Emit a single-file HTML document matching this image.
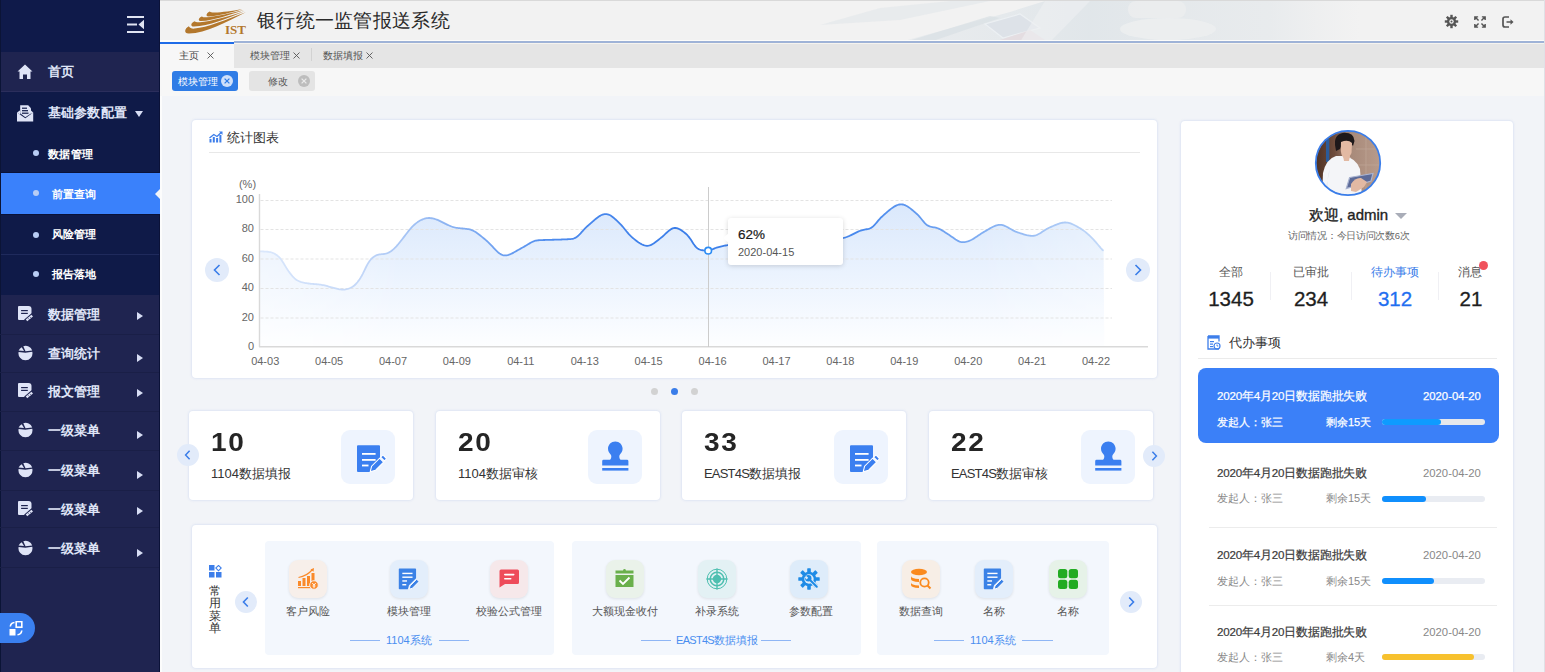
<!DOCTYPE html>
<html><head><meta charset="utf-8">
<style>
*{box-sizing:border-box;margin:0;padding:0}
html,body{width:1545px;height:672px;overflow:hidden}
body{position:relative;background:#f2f4f8;font-family:"Liberation Sans",sans-serif;color:#333}
.a{position:absolute}
svg{display:block}
/* sidebar */
.mi{position:absolute;left:0;width:159px;color:#dfe4f7;font-size:13.3px;letter-spacing:0.3px;font-weight:bold;line-height:20px;height:20px}
.mi .t{position:absolute;left:47.5px;top:0}
.mi svg{position:absolute}
.sub{position:absolute;left:0;width:159px;color:#fff;font-size:11.4px;font-weight:bold;height:16px}
.sub .dot{position:absolute;left:33px;top:5px;width:6px;height:6px;border-radius:50%;background:#b8cdf5}
.sub .t{position:absolute;left:51.5px;top:1px;line-height:16px;letter-spacing:0.3px}
.arr{position:absolute;left:137px;width:0;height:0;border-top:4px solid transparent;border-bottom:4px solid transparent;border-left:6px solid #d8def5}
.sep{position:absolute;left:0;width:159px;height:1px;background:#1a1f47}
</style></head><body>
<!-- SIDEBAR -->
<div class="a" style="left:0;top:0;width:160px;height:672px;background:#1f2450">
  <div class="a" style="left:0;top:0;width:160px;height:52px;background:#0f1a4a"></div>
  <div class="a" style="left:0;top:92px;width:160px;height:203px;background:#0f1a48"></div>
  <div class="a" style="left:0;top:172px;width:160px;height:1px;background:#0a1238"></div><div class="a" style="left:0;top:173px;width:160px;height:41px;background:#3a81fb"></div><div class="a" style="left:0;top:214px;width:160px;height:1px;background:#0a1238"></div>
  <div class="a" style="left:0;top:254px;width:160px;height:1px;background:#1f2a5c"></div>
  <div class="a" style="left:0;top:91px;width:160px;height:1px;background:#2b2e5c"></div>
  <div class="a" style="left:0;top:0;width:1px;height:672px;background:#0b1436"></div>
  <div class="a" style="left:159px;top:0;width:1px;height:172px;background:#0b1238"></div><div class="a" style="left:159px;top:215px;width:1px;height:457px;background:#0b1238"></div><div class="a" style="left:160px;top:44px;width:2px;height:628px;background:#fcfcfc"></div>
  <!-- hamburger -->
  <svg class="a" style="left:127px;top:16px" width="18" height="17" viewBox="0 0 18 17">
    <rect x="0" y="0" width="17" height="2" fill="#e0e4f2"/>
    <rect x="0" y="7.5" width="10" height="2" fill="#e0e4f2"/>
    <rect x="0" y="15" width="17" height="2" fill="#e0e4f2"/>
    <path d="M17 3.8 L11.5 8.5 L17 13.2Z" fill="#e0e4f2"/>
  </svg>
  <!-- 首页 -->
  <div class="mi" style="top:62px">
    <svg style="left:17px;top:2px" width="16" height="16" viewBox="0 0 16 16"><path d="M8 0.5 L15.5 7.5 L13.5 7.5 L13.5 15 L10 15 L10 10.5 L6 10.5 L6 15 L2.5 15 L2.5 7.5 L0.5 7.5Z" fill="#dfe4f7"/></svg>
    <span class="t" style="left:48px;font-size:13.3px">首页</span>
  </div>
  <!-- 基础参数配置 -->
  <div class="mi" style="top:103px">
    <svg style="left:17px;top:1px" width="17" height="18" viewBox="0 0 17 18"><path d="M0 8.5 L8.3 14.2 L16.2 8.5 V17.5 H0Z" fill="#dfe4f7"/><path d="M3.2 9.2 V1.2 H11.2 L14 4.3 V9.5 L8.3 13.2Z" fill="#dfe4f7"/><g fill="#0f1a48"><rect x="5" y="3.6" width="5" height="1.2"/><rect x="5" y="6.1" width="6" height="1.2"/><rect x="5" y="8.6" width="6.5" height="1.2"/></g><path d="M0 8.5 L3.2 6.2 V10.7Z M16.2 8.5 L14 6.5 V10Z" fill="#dfe4f7"/></svg>
    <span class="t">基础参数配置</span>
    <div class="a" style="left:135px;top:8px;width:0;height:0;border-left:4.5px solid transparent;border-right:4.5px solid transparent;border-top:6px solid #d8def5"></div>
  </div>
  <div class="sub" style="top:145px"><span class="dot"></span><span class="t" style="left:48px">数据管理</span></div>
  <div class="sub" style="top:185px"><span class="dot"></span><span class="t">前置查询</span></div>
  <div class="a" style="left:155px;top:188.7px;width:0;height:0;border-top:5px solid transparent;border-bottom:5px solid transparent;border-right:5px solid #f2f4f8"></div>
  <div class="sub" style="top:225px"><span class="dot" style="top:6.5px"></span><span class="t">风险管理</span></div>
  <div class="sub" style="top:265px"><span class="dot" style="top:6px"></span><span class="t">报告落地</span></div>
  <div class="mi" style="top:305px"><svg style="left:17px;top:0px" width="17" height="18" viewBox="0 0 17 18"><path d="M2 1 H11.5 Q14.5 1 14.5 4 V10.5 L8.5 15 H2 Q1 15 1 14 V2 Q1 1 2 1Z" fill="#dfe4f7"/><rect x="4.1" y="5" width="6.7" height="1.2" fill="#1f2450"/><rect x="4.1" y="7.8" width="6.7" height="1.2" fill="#1f2450"/><path d="M9.3 15.6 L15.4 10.4" stroke="#1f2450" stroke-width="4.4" stroke-linecap="round"/><path d="M9.5 15.4 L15.2 10.6" stroke="#dfe4f7" stroke-width="2.4"/><path d="M11 13.2 L12.4 14.6 M12.8 11.7 L14.2 13.1" stroke="#1f2450" stroke-width="0.6"/></svg><span class="t">数据管理</span><div class="arr" style="top:7px"></div></div>
<div class="mi" style="top:344px"><svg style="left:18px;top:1px" width="16" height="16" viewBox="0 0 16 16"><g fill="#dfe4f7"><path d="M14.3 6.8 A7 7 0 1 1 0.6 6.9 L7.4 7.7Z"/><path d="M7.5 6.2 L14.2 5.5 A7.1 7.1 0 0 0 5.3 1.2 Z"/><path d="M6.1 6 L3.7 2.2 A7 7 0 0 0 0.6 5.5 Z"/></g></svg><span class="t">查询统计</span><div class="arr" style="top:10px"></div></div>
<div class="mi" style="top:382px"><svg style="left:17px;top:0px" width="17" height="18" viewBox="0 0 17 18"><path d="M2 1 H11.5 Q14.5 1 14.5 4 V10.5 L8.5 15 H2 Q1 15 1 14 V2 Q1 1 2 1Z" fill="#dfe4f7"/><rect x="4.1" y="5" width="6.7" height="1.2" fill="#1f2450"/><rect x="4.1" y="7.8" width="6.7" height="1.2" fill="#1f2450"/><path d="M9.3 15.6 L15.4 10.4" stroke="#1f2450" stroke-width="4.4" stroke-linecap="round"/><path d="M9.5 15.4 L15.2 10.6" stroke="#dfe4f7" stroke-width="2.4"/><path d="M11 13.2 L12.4 14.6 M12.8 11.7 L14.2 13.1" stroke="#1f2450" stroke-width="0.6"/></svg><span class="t">报文管理</span><div class="arr" style="top:7px"></div></div>
<div class="mi" style="top:421px"><svg style="left:18px;top:1px" width="16" height="16" viewBox="0 0 16 16"><g fill="#dfe4f7"><path d="M14.3 6.8 A7 7 0 1 1 0.6 6.9 L7.4 7.7Z"/><path d="M7.5 6.2 L14.2 5.5 A7.1 7.1 0 0 0 5.3 1.2 Z"/><path d="M6.1 6 L3.7 2.2 A7 7 0 0 0 0.6 5.5 Z"/></g></svg><span class="t">一级菜单</span><div class="arr" style="top:10px"></div></div>
<div class="mi" style="top:461px"><svg style="left:18px;top:1px" width="16" height="16" viewBox="0 0 16 16"><g fill="#dfe4f7"><path d="M14.3 6.8 A7 7 0 1 1 0.6 6.9 L7.4 7.7Z"/><path d="M7.5 6.2 L14.2 5.5 A7.1 7.1 0 0 0 5.3 1.2 Z"/><path d="M6.1 6 L3.7 2.2 A7 7 0 0 0 0.6 5.5 Z"/></g></svg><span class="t">一级菜单</span><div class="arr" style="top:10px"></div></div>
<div class="mi" style="top:500px"><svg style="left:17px;top:0px" width="17" height="18" viewBox="0 0 17 18"><path d="M2 1 H11.5 Q14.5 1 14.5 4 V10.5 L8.5 15 H2 Q1 15 1 14 V2 Q1 1 2 1Z" fill="#dfe4f7"/><rect x="4.1" y="5" width="6.7" height="1.2" fill="#1f2450"/><rect x="4.1" y="7.8" width="6.7" height="1.2" fill="#1f2450"/><path d="M9.3 15.6 L15.4 10.4" stroke="#1f2450" stroke-width="4.4" stroke-linecap="round"/><path d="M9.5 15.4 L15.2 10.6" stroke="#dfe4f7" stroke-width="2.4"/><path d="M11 13.2 L12.4 14.6 M12.8 11.7 L14.2 13.1" stroke="#1f2450" stroke-width="0.6"/></svg><span class="t">一级菜单</span><div class="arr" style="top:7px"></div></div>
<div class="mi" style="top:539px"><svg style="left:18px;top:1px" width="16" height="16" viewBox="0 0 16 16"><g fill="#dfe4f7"><path d="M14.3 6.8 A7 7 0 1 1 0.6 6.9 L7.4 7.7Z"/><path d="M7.5 6.2 L14.2 5.5 A7.1 7.1 0 0 0 5.3 1.2 Z"/><path d="M6.1 6 L3.7 2.2 A7 7 0 0 0 0.6 5.5 Z"/></g></svg><span class="t">一级菜单</span><div class="arr" style="top:10px"></div></div>
<div class="sep" style="top:334px"></div>
<div class="sep" style="top:372px"></div>
<div class="sep" style="top:411px"></div>
<div class="sep" style="top:450px"></div>
<div class="sep" style="top:490px"></div>
<div class="sep" style="top:527px"></div>
<div class="sep" style="top:567px"></div>

  <!-- bottom pill -->
  <div class="a" style="left:0;top:613px;width:35px;height:30px;border-radius:0 15px 15px 0;background:#3a80f0"></div>
  <svg class="a" style="left:9px;top:621px" width="14" height="15" viewBox="0 0 14 15">
    <rect x="7.2" y="0.6" width="5.6" height="5.6" fill="none" stroke="#fff" stroke-width="1.6"/>
    <rect x="0.5" y="8" width="6" height="6.5" fill="#fff"/>
    <path d="M5.5 1.5 Q1.8 1.8 1.3 5.5" fill="none" stroke="#fff" stroke-width="1.6"/>
    <path d="M8.5 13.8 Q12.3 13.5 12.8 9.5" fill="none" stroke="#fff" stroke-width="1.6"/>
  </svg>
</div>

<!-- HEADER -->
<div class="a" style="left:160px;top:0;width:1385px;height:42px;background:#f2f2f2;border-top:1px solid #d9d9d9"></div>
<svg class="a" style="left:760px;top:1px" width="600" height="41" viewBox="760 1 600 41">
 <defs><linearGradient id="wm" x1="760" y1="0" x2="1360" y2="0" gradientUnits="userSpaceOnUse"><stop offset="0" stop-color="#e2e7eb" stop-opacity="0"/><stop offset="0.2" stop-color="#e2e7eb" stop-opacity="0.5"/><stop offset="0.55" stop-color="#dfe5e9" stop-opacity="0.9"/><stop offset="0.85" stop-color="#e4e8eb" stop-opacity="0.7"/><stop offset="1" stop-color="#e8eaec" stop-opacity="0"/></linearGradient></defs>
 <path d="M900 42 L1010 12 L1045 1 L1360 1 L1360 42Z" fill="url(#wm)"/>
 <path d="M820 25 L880 8 L950 1 L990 1 L900 20Z" fill="#e4e8eb" opacity="0.7"/>
 <path d="M905 42 L990 16 L1000 18 L930 42Z" fill="#d9dfe4" opacity="0.7"/>
 <path d="M985 24 L1020 14 L1040 28 L1003 38Z" fill="#dde2e8" stroke="#ecf0f3" stroke-width="1.2"/>
 <path d="M1000 40 L1030 30 L1045 40Z" fill="#e3d9de" opacity="0.8"/>
 <ellipse cx="1168" cy="29" rx="48" ry="11" fill="#eceef0" opacity="0.9"/>
 <rect x="1128" y="1" width="58" height="17" rx="8" fill="#eceeef" opacity="0.8"/>
 <path d="M1045 1 L1090 1 L1050 42 L1020 42Z" fill="#eef0f2" opacity="0.6"/>
</svg>
<div class="a" style="left:160px;top:40px;width:1385px;height:1px;background:#fdfdfb"></div><div class="a" style="left:160px;top:41px;width:1385px;height:2px;background:#9fb3d7"></div><div class="a" style="left:160px;top:43px;width:1385px;height:1px;background:#f6f4ef"></div>
<div class="a" style="left:160px;top:41px;width:74px;height:1px;background:#fdfdfb"></div><div class="a" style="left:160px;top:42px;width:74px;height:2px;background:#1f6ce8"></div>
<svg class="a" style="left:182px;top:5px" width="70" height="35" viewBox="182 5 70 35">
  <g fill="#b3772c">
   <path d="M188.8 26.3 C184.5 28.5 183.5 33.8 189 33.6 C206 33 226 22.5 245.8 12.3 C226 19.8 207 27.6 194.5 28.6 C191.5 28.8 189.8 28 188.8 26.3Z"/>
   <path d="M194.6 21.2 C190.8 22.8 190 26.6 194 26.5 C209 25.6 226 19 244.8 10.9 C227 17 211 21 200 22.2 C197.3 22.5 195.7 22.1 194.6 21.2Z"/>
   <path d="M201.8 16.5 C198.4 17.8 197.6 21.2 201 21.1 C214 20.2 229 15 243.8 9.9 C230 13.3 216 16.4 206.8 17.3 C204.3 17.5 202.8 17.2 201.8 16.5Z"/>
   <path d="M209.8 11.6 C206.6 12.8 205 16.6 208.6 16.5 C219 16 231 12.6 242.2 9.3 C232 11 222 12.4 214.6 12.6 C212 12.7 210.7 12.4 209.8 11.6Z"/>
  </g>
  <text x="225" y="33.9" font-family="Liberation Serif" font-size="13" font-weight="bold" fill="#b3772c">IST</text>
</svg>
<div class="a" style="left:257px;top:9px;font-size:19.3px;letter-spacing:0.3px;line-height:24px;color:#2a2a2a">银行统一监管报送系统</div>
<!-- header icons -->
<svg class="a" style="left:1444px;top:14px" width="15" height="15" viewBox="0 0 15 15">
  <g fill="#555"><circle cx="7.5" cy="7.5" r="4.6"/>
  <g id="tooth"><rect x="6.3" y="0.8" width="2.4" height="3"/></g>
  <use href="#tooth" transform="rotate(45 7.5 7.5)"/><use href="#tooth" transform="rotate(90 7.5 7.5)"/><use href="#tooth" transform="rotate(135 7.5 7.5)"/><use href="#tooth" transform="rotate(180 7.5 7.5)"/><use href="#tooth" transform="rotate(225 7.5 7.5)"/><use href="#tooth" transform="rotate(270 7.5 7.5)"/><use href="#tooth" transform="rotate(315 7.5 7.5)"/></g>
  <circle cx="7.5" cy="7.5" r="2.2" fill="#f2f2f2"/><circle cx="7.5" cy="7.5" r="1" fill="#555"/>
</svg>
<svg class="a" style="left:1474px;top:15.5px" width="12" height="12" viewBox="0 0 14 14">
  <g fill="none" stroke="#555" stroke-width="1.7">
   <path d="M1 4.8 V1 H4.8 M1 1 L5.3 5.3"/><path d="M9.2 1 H13 V4.8 M13 1 L8.7 5.3"/><path d="M1 9.2 V13 H4.8 M1 13 L5.3 8.7"/><path d="M13 9.2 V13 H9.2 M13 13 L8.7 8.7"/>
  </g>
</svg>
<svg class="a" style="left:1501.5px;top:15.5px" width="12" height="12" viewBox="0 0 12 12">
  <path d="M7 1 H3 Q1 1 1 3 V9 Q1 11 3 11 H7" fill="none" stroke="#555" stroke-width="1.7"/><path d="M4.5 6 H9" stroke="#555" stroke-width="1.5"/><path d="M8.5 3.3 L11.5 6 L8.5 8.7Z" fill="#555"/>
</svg>

<!-- TABS -->
<div class="a" style="left:160px;top:44px;width:1385px;height:24px;background:#e5e5e5"></div>
<div class="a" style="left:160px;top:44px;width:74px;height:24px;background:#f7f7f7"></div>
<div class="a" style="left:179px;top:48px;font-size:10.1px;line-height:16px;color:#444">主页</div>
<svg class="a" style="left:207px;top:52px" width="7" height="7" viewBox="0 0 7 7"><path d="M0.5 0.5 L6.5 6.5 M6.5 0.5 L0.5 6.5" stroke="#555" stroke-width="0.9"/></svg>
<div class="a" style="left:250px;top:48px;font-size:10.1px;line-height:16px;color:#555">模块管理</div>
<svg class="a" style="left:293px;top:52px" width="7" height="7" viewBox="0 0 7 7"><path d="M0.5 0.5 L6.5 6.5 M6.5 0.5 L0.5 6.5" stroke="#555" stroke-width="0.9"/></svg>
<div class="a" style="left:311px;top:48px;width:1px;height:13px;background:#d2d2d2"></div>
<div class="a" style="left:323px;top:48px;font-size:10.1px;line-height:16px;color:#555">数据填报</div>
<svg class="a" style="left:366px;top:52px" width="7" height="7" viewBox="0 0 7 7"><path d="M0.5 0.5 L6.5 6.5 M6.5 0.5 L0.5 6.5" stroke="#555" stroke-width="0.9"/></svg>
<!-- TAGS -->
<div class="a" style="left:160px;top:68px;width:1385px;height:28px;background:#f7f7f7"></div>
<div class="a" style="left:172px;top:71px;width:66px;height:20px;border-radius:3px;background:#2f7ce6"></div>
<div class="a" style="left:178px;top:74px;font-size:10.1px;line-height:16px;color:#fff">模块管理</div>
<svg class="a" style="left:221px;top:75px" width="12" height="12" viewBox="0 0 12 12"><circle cx="6" cy="6" r="6" fill="#cfe0fa"/><path d="M3.6 3.6 L8.4 8.4 M8.4 3.6 L3.6 8.4" stroke="#2f7ce6" stroke-width="1.3"/></svg>
<div class="a" style="left:249px;top:71px;width:66px;height:20px;border-radius:3px;background:#e4e4e4"></div>
<div class="a" style="left:268px;top:74px;font-size:10.1px;line-height:16px;color:#555">修改</div>
<svg class="a" style="left:298px;top:75px" width="12" height="12" viewBox="0 0 12 12"><circle cx="6" cy="6" r="6" fill="#bdbdbd"/><path d="M3.6 3.6 L8.4 8.4 M8.4 3.6 L3.6 8.4" stroke="#eaeaea" stroke-width="1.3"/></svg>

<!-- CHART PANEL -->
<div class="a" style="left:192px;top:120px;width:965px;height:258px;background:#fff;border-radius:4px;box-shadow:0 0 2px 1px rgba(215,224,242,0.7)"></div>
<svg class="a" style="left:209px;top:131px" width="14" height="12" viewBox="0 0 14 12">
 <g fill="#3d7eea"><rect x="0.5" y="8" width="2" height="3.5"/><rect x="3.8" y="6" width="2" height="5.5"/><rect x="7.1" y="7" width="2" height="4.5"/><rect x="10.4" y="4" width="2" height="7.5"/></g>
 <path d="M0.5 7 L4.8 3.5 L8 5.5 L12.5 1.2" fill="none" stroke="#3d7eea" stroke-width="1.3"/><path d="M10 0.5 L13.5 0.5 L13.5 4Z" fill="#3d7eea"/>
</svg>
<div class="a" style="left:227px;top:129px;font-size:12.5px;line-height:18px;color:#333">统计图表</div>
<div class="a" style="left:209px;top:152px;width:931px;height:1px;background:#e8e8e8"></div>
<svg class="a" style="left:192px;top:120px" width="965" height="258" viewBox="192 120 965 258">
 <defs>
  <linearGradient id="lg" x1="259" y1="0" x2="1105" y2="0" gradientUnits="userSpaceOnUse">
   <stop offset="0" stop-color="#dbe8fc"/><stop offset="0.12" stop-color="#c3d7f8"/><stop offset="0.22" stop-color="#8db4f2"/><stop offset="0.35" stop-color="#4d8bee"/><stop offset="0.5" stop-color="#3a7de9"/><stop offset="0.72" stop-color="#4a8aed"/><stop offset="0.88" stop-color="#8cb5f3"/><stop offset="1" stop-color="#c5daf8"/>
  </linearGradient>
  <linearGradient id="ag" x1="0" y1="204" x2="0" y2="347" gradientUnits="userSpaceOnUse">
   <stop offset="0" stop-color="#dae8fc"/><stop offset="0.5" stop-color="#ebf3fe"/><stop offset="0.85" stop-color="#f8fbff"/><stop offset="1" stop-color="#fdfeff"/>
  </linearGradient>
  <linearGradient id="amg" x1="259" y1="0" x2="1105" y2="0" gradientUnits="userSpaceOnUse"><stop offset="0" stop-color="#fff" stop-opacity="0.6"/><stop offset="0.17" stop-color="#fff" stop-opacity="1"/><stop offset="0.85" stop-color="#fff" stop-opacity="1"/><stop offset="1" stop-color="#fff" stop-opacity="0.75"/></linearGradient>
  <mask id="am" maskUnits="userSpaceOnUse" x="250" y="190" width="870" height="170"><rect x="250" y="190" width="870" height="170" fill="url(#amg)"/></mask>
 </defs>
 <path d="M259.6 251.41 L260.6 251.43 L261.6 251.44 L262.6 251.47 L263.6 251.51 L264.6 251.55 L265.6 251.61 L266.6 251.68 L267.6 251.76 L268.6 251.88 L269.6 252.03 L270.6 252.23 L271.6 252.50 L272.6 252.85 L273.6 253.29 L274.6 253.80 L275.6 254.39 L276.6 255.06 L277.6 255.81 L278.6 256.67 L279.6 257.67 L280.6 258.83 L281.6 260.17 L282.6 261.68 L283.6 263.30 L284.6 264.97 L285.6 266.65 L286.6 268.26 L287.6 269.79 L288.6 271.24 L289.6 272.61 L290.6 273.91 L291.6 275.15 L292.6 276.32 L293.6 277.40 L294.6 278.37 L295.6 279.21 L296.6 279.93 L297.6 280.53 L298.6 281.02 L299.6 281.43 L300.6 281.78 L301.6 282.09 L302.6 282.36 L303.6 282.61 L304.6 282.83 L305.6 283.03 L306.6 283.21 L307.6 283.37 L308.6 283.51 L309.6 283.63 L310.6 283.75 L311.6 283.84 L312.6 283.93 L313.6 284.01 L314.6 284.09 L315.6 284.16 L316.6 284.24 L317.6 284.33 L318.6 284.43 L319.6 284.54 L320.6 284.68 L321.6 284.84 L322.6 285.02 L323.6 285.23 L324.6 285.46 L325.6 285.71 L326.6 285.97 L327.6 286.24 L328.6 286.51 L329.6 286.78 L330.6 287.04 L331.6 287.30 L332.6 287.56 L333.6 287.82 L334.6 288.08 L335.6 288.34 L336.6 288.60 L337.6 288.85 L338.6 289.08 L339.6 289.28 L340.6 289.44 L341.6 289.56 L342.6 289.62 L343.6 289.62 L344.6 289.55 L345.6 289.41 L346.6 289.21 L347.6 288.94 L348.6 288.61 L349.6 288.22 L350.6 287.78 L351.6 287.28 L352.6 286.70 L353.6 286.02 L354.6 285.22 L355.6 284.28 L356.6 283.20 L357.6 281.98 L358.6 280.65 L359.6 279.20 L360.6 277.64 L361.6 275.95 L362.6 274.11 L363.6 272.15 L364.6 270.09 L365.6 268.01 L366.6 266.00 L367.6 264.12 L368.6 262.44 L369.6 260.98 L370.6 259.73 L371.6 258.65 L372.6 257.72 L373.6 256.91 L374.6 256.23 L375.6 255.66 L376.6 255.21 L377.6 254.87 L378.6 254.63 L379.6 254.45 L380.6 254.32 L381.6 254.22 L382.6 254.12 L383.6 254.01 L384.6 253.87 L385.6 253.68 L386.6 253.41 L387.6 253.05 L388.6 252.59 L389.6 252.04 L390.6 251.40 L391.6 250.69 L392.6 249.92 L393.6 249.07 L394.6 248.16 L395.6 247.17 L396.6 246.10 L397.6 244.96 L398.6 243.76 L399.6 242.52 L400.6 241.26 L401.6 239.98 L402.6 238.70 L403.6 237.41 L404.6 236.10 L405.6 234.79 L406.6 233.48 L407.6 232.19 L408.6 230.93 L409.6 229.72 L410.6 228.56 L411.6 227.47 L412.6 226.43 L413.6 225.46 L414.6 224.53 L415.6 223.66 L416.6 222.85 L417.6 222.10 L418.6 221.43 L419.6 220.83 L420.6 220.29 L421.6 219.81 L422.6 219.38 L423.6 219.00 L424.6 218.67 L425.6 218.39 L426.6 218.19 L427.6 218.05 L428.6 218.00 L429.6 218.02 L430.6 218.10 L431.6 218.25 L432.6 218.44 L433.6 218.67 L434.6 218.94 L435.6 219.24 L436.6 219.57 L437.6 219.95 L438.6 220.37 L439.6 220.84 L440.6 221.34 L441.6 221.86 L442.6 222.38 L443.6 222.90 L444.6 223.40 L445.6 223.89 L446.6 224.37 L447.6 224.83 L448.6 225.28 L449.6 225.71 L450.6 226.12 L451.6 226.50 L452.6 226.84 L453.6 227.15 L454.6 227.40 L455.6 227.62 L456.6 227.80 L457.6 227.96 L458.6 228.09 L459.6 228.20 L460.6 228.30 L461.6 228.40 L462.6 228.49 L463.6 228.58 L464.6 228.68 L465.6 228.79 L466.6 228.91 L467.6 229.06 L468.6 229.23 L469.6 229.45 L470.6 229.72 L471.6 230.05 L472.6 230.45 L473.6 230.93 L474.6 231.47 L475.6 232.08 L476.6 232.74 L477.6 233.46 L478.6 234.20 L479.6 234.98 L480.6 235.78 L481.6 236.59 L482.6 237.41 L483.6 238.23 L484.6 239.05 L485.6 239.87 L486.6 240.72 L487.6 241.61 L488.6 242.54 L489.6 243.52 L490.6 244.55 L491.6 245.61 L492.6 246.70 L493.6 247.79 L494.6 248.86 L495.6 249.91 L496.6 250.91 L497.6 251.85 L498.6 252.71 L499.6 253.47 L500.6 254.12 L501.6 254.64 L502.6 255.03 L503.6 255.28 L504.6 255.39 L505.6 255.39 L506.6 255.28 L507.6 255.07 L508.6 254.79 L509.6 254.45 L510.6 254.05 L511.6 253.60 L512.6 253.10 L513.6 252.58 L514.6 252.03 L515.6 251.47 L516.6 250.89 L517.6 250.31 L518.6 249.74 L519.6 249.17 L520.6 248.62 L521.6 248.07 L522.6 247.52 L523.6 246.97 L524.6 246.40 L525.6 245.81 L526.6 245.20 L527.6 244.58 L528.6 243.97 L529.6 243.36 L530.6 242.79 L531.6 242.25 L532.6 241.76 L533.6 241.34 L534.6 240.99 L535.6 240.71 L536.6 240.51 L537.6 240.36 L538.6 240.26 L539.6 240.19 L540.6 240.13 L541.6 240.09 L542.6 240.06 L543.6 240.02 L544.6 240.00 L545.6 239.97 L546.6 239.94 L547.6 239.91 L548.6 239.89 L549.6 239.86 L550.6 239.83 L551.6 239.80 L552.6 239.76 L553.6 239.73 L554.6 239.70 L555.6 239.67 L556.6 239.64 L557.6 239.61 L558.6 239.58 L559.6 239.56 L560.6 239.53 L561.6 239.50 L562.6 239.46 L563.6 239.43 L564.6 239.39 L565.6 239.35 L566.6 239.31 L567.6 239.26 L568.6 239.20 L569.6 239.14 L570.6 239.05 L571.6 238.94 L572.6 238.77 L573.6 238.52 L574.6 238.16 L575.6 237.66 L576.6 237.02 L577.6 236.25 L578.6 235.36 L579.6 234.37 L580.6 233.32 L581.6 232.22 L582.6 231.10 L583.6 229.99 L584.6 228.92 L585.6 227.89 L586.6 226.91 L587.6 225.99 L588.6 225.10 L589.6 224.23 L590.6 223.36 L591.6 222.50 L592.6 221.63 L593.6 220.76 L594.6 219.90 L595.6 219.06 L596.6 218.26 L597.6 217.49 L598.6 216.77 L599.6 216.12 L600.6 215.53 L601.6 215.03 L602.6 214.62 L603.6 214.31 L604.6 214.11 L605.6 214.03 L606.6 214.08 L607.6 214.27 L608.6 214.58 L609.6 215.02 L610.6 215.56 L611.6 216.21 L612.6 216.94 L613.6 217.74 L614.6 218.60 L615.6 219.50 L616.6 220.42 L617.6 221.37 L618.6 222.33 L619.6 223.32 L620.6 224.33 L621.6 225.40 L622.6 226.53 L623.6 227.72 L624.6 228.96 L625.6 230.21 L626.6 231.47 L627.6 232.69 L628.6 233.86 L629.6 234.95 L630.6 235.96 L631.6 236.89 L632.6 237.77 L633.6 238.60 L634.6 239.41 L635.6 240.20 L636.6 240.96 L637.6 241.70 L638.6 242.40 L639.6 243.06 L640.6 243.66 L641.6 244.21 L642.6 244.70 L643.6 245.10 L644.6 245.42 L645.6 245.65 L646.6 245.77 L647.6 245.78 L648.6 245.66 L649.6 245.43 L650.6 245.07 L651.6 244.60 L652.6 244.04 L653.6 243.40 L654.6 242.70 L655.6 241.97 L656.6 241.21 L657.6 240.45 L658.6 239.68 L659.6 238.91 L660.6 238.12 L661.6 237.31 L662.6 236.45 L663.6 235.56 L664.6 234.63 L665.6 233.68 L666.6 232.74 L667.6 231.82 L668.6 230.95 L669.6 230.16 L670.6 229.46 L671.6 228.88 L672.6 228.43 L673.6 228.14 L674.6 227.99 L675.6 228.00 L676.6 228.15 L677.6 228.42 L678.6 228.80 L679.6 229.28 L680.6 229.84 L681.6 230.47 L682.6 231.16 L683.6 231.90 L684.6 232.69 L685.6 233.53 L686.6 234.45 L687.6 235.47 L688.6 236.61 L689.6 237.91 L690.6 239.33 L691.6 240.85 L692.6 242.40 L693.6 243.92 L694.6 245.34 L695.6 246.59 L696.6 247.63 L697.6 248.45 L698.6 249.06 L699.6 249.50 L700.6 249.82 L701.6 250.06 L702.6 250.24 L703.6 250.40 L704.6 250.52 L705.6 250.60 L706.6 250.64 L707.6 250.61 L708.6 250.51 L709.6 250.32 L710.6 250.05 L711.6 249.69 L712.6 249.28 L713.6 248.85 L714.6 248.42 L715.6 248.02 L716.6 247.66 L717.6 247.33 L718.6 247.04 L719.6 246.77 L720.6 246.51 L721.6 246.28 L722.6 246.06 L723.6 245.85 L724.6 245.66 L725.6 245.49 L726.6 245.33 L727.6 245.18 L728.6 245.05 L729.6 244.92 L730.6 244.80 L731.6 244.68 L732.6 244.56 L733.6 244.45 L734.6 244.34 L735.6 244.23 L736.6 244.13 L737.6 244.03 L738.6 243.93 L739.6 243.84 L740.6 243.75 L741.6 243.66 L742.6 243.57 L743.6 243.49 L744.6 243.41 L745.6 243.33 L746.6 243.26 L747.6 243.18 L748.6 243.11 L749.6 243.05 L750.6 242.98 L751.6 242.92 L752.6 242.86 L753.6 242.81 L754.6 242.75 L755.6 242.70 L756.6 242.65 L757.6 242.61 L758.6 242.56 L759.6 242.52 L760.6 242.48 L761.6 242.44 L762.6 242.41 L763.6 242.38 L764.6 242.34 L765.6 242.31 L766.6 242.29 L767.6 242.26 L768.6 242.23 L769.6 242.21 L770.6 242.18 L771.6 242.16 L772.6 242.14 L773.6 242.12 L774.6 242.10 L775.6 242.08 L776.6 242.06 L777.6 242.04 L778.6 242.02 L779.6 242.00 L780.6 241.98 L781.6 241.96 L782.6 241.95 L783.6 241.93 L784.6 241.91 L785.6 241.89 L786.6 241.87 L787.6 241.85 L788.6 241.83 L789.6 241.80 L790.6 241.78 L791.6 241.76 L792.6 241.73 L793.6 241.70 L794.6 241.67 L795.6 241.65 L796.6 241.61 L797.6 241.58 L798.6 241.55 L799.6 241.51 L800.6 241.47 L801.6 241.44 L802.6 241.40 L803.6 241.35 L804.6 241.31 L805.6 241.27 L806.6 241.22 L807.6 241.18 L808.6 241.13 L809.6 241.08 L810.6 241.03 L811.6 240.97 L812.6 240.92 L813.6 240.86 L814.6 240.81 L815.6 240.74 L816.6 240.68 L817.6 240.62 L818.6 240.55 L819.6 240.48 L820.6 240.41 L821.6 240.34 L822.6 240.26 L823.6 240.18 L824.6 240.10 L825.6 240.01 L826.6 239.93 L827.6 239.84 L828.6 239.74 L829.6 239.65 L830.6 239.55 L831.6 239.44 L832.6 239.34 L833.6 239.23 L834.6 239.11 L835.6 239.00 L836.6 238.88 L837.6 238.75 L838.6 238.63 L839.6 238.49 L840.6 238.35 L841.6 238.20 L842.6 238.03 L843.6 237.83 L844.6 237.60 L845.6 237.33 L846.6 237.01 L847.6 236.65 L848.6 236.24 L849.6 235.81 L850.6 235.34 L851.6 234.85 L852.6 234.35 L853.6 233.84 L854.6 233.33 L855.6 232.83 L856.6 232.34 L857.6 231.87 L858.6 231.43 L859.6 231.02 L860.6 230.65 L861.6 230.32 L862.6 230.04 L863.6 229.80 L864.6 229.60 L865.6 229.42 L866.6 229.25 L867.6 229.06 L868.6 228.84 L869.6 228.53 L870.6 228.11 L871.6 227.55 L872.6 226.82 L873.6 225.93 L874.6 224.90 L875.6 223.76 L876.6 222.57 L877.6 221.35 L878.6 220.17 L879.6 219.04 L880.6 217.98 L881.6 216.99 L882.6 216.05 L883.6 215.14 L884.6 214.25 L885.6 213.37 L886.6 212.49 L887.6 211.62 L888.6 210.77 L889.6 209.94 L890.6 209.14 L891.6 208.38 L892.6 207.66 L893.6 207.00 L894.6 206.39 L895.6 205.85 L896.6 205.38 L897.6 204.99 L898.6 204.69 L899.6 204.49 L900.6 204.38 L901.6 204.39 L902.6 204.50 L903.6 204.72 L904.6 205.04 L905.6 205.45 L906.6 205.96 L907.6 206.54 L908.6 207.18 L909.6 207.89 L910.6 208.64 L911.6 209.44 L912.6 210.26 L913.6 211.10 L914.6 211.95 L915.6 212.83 L916.6 213.74 L917.6 214.69 L918.6 215.72 L919.6 216.82 L920.6 218.00 L921.6 219.23 L922.6 220.48 L923.6 221.69 L924.6 222.83 L925.6 223.85 L926.6 224.71 L927.6 225.41 L928.6 225.95 L929.6 226.35 L930.6 226.65 L931.6 226.89 L932.6 227.08 L933.6 227.27 L934.6 227.46 L935.6 227.67 L936.6 227.93 L937.6 228.24 L938.6 228.61 L939.6 229.06 L940.6 229.56 L941.6 230.12 L942.6 230.72 L943.6 231.36 L944.6 232.01 L945.6 232.66 L946.6 233.31 L947.6 233.96 L948.6 234.61 L949.6 235.27 L950.6 235.95 L951.6 236.64 L952.6 237.35 L953.6 238.06 L954.6 238.75 L955.6 239.43 L956.6 240.06 L957.6 240.64 L958.6 241.14 L959.6 241.56 L960.6 241.88 L961.6 242.10 L962.6 242.21 L963.6 242.21 L964.6 242.11 L965.6 241.93 L966.6 241.69 L967.6 241.39 L968.6 241.05 L969.6 240.66 L970.6 240.23 L971.6 239.75 L972.6 239.21 L973.6 238.63 L974.6 238.01 L975.6 237.36 L976.6 236.69 L977.6 236.01 L978.6 235.32 L979.6 234.65 L980.6 233.99 L981.6 233.35 L982.6 232.74 L983.6 232.14 L984.6 231.56 L985.6 230.98 L986.6 230.40 L987.6 229.82 L988.6 229.23 L989.6 228.65 L990.6 228.08 L991.6 227.52 L992.6 227.00 L993.6 226.52 L994.6 226.08 L995.6 225.69 L996.6 225.36 L997.6 225.11 L998.6 224.94 L999.6 224.85 L1000.6 224.86 L1001.6 224.97 L1002.6 225.16 L1003.6 225.45 L1004.6 225.82 L1005.6 226.26 L1006.6 226.75 L1007.6 227.28 L1008.6 227.85 L1009.6 228.43 L1010.6 229.01 L1011.6 229.58 L1012.6 230.13 L1013.6 230.65 L1014.6 231.12 L1015.6 231.56 L1016.6 231.96 L1017.6 232.33 L1018.6 232.67 L1019.6 233.01 L1020.6 233.34 L1021.6 233.66 L1022.6 233.98 L1023.6 234.28 L1024.6 234.56 L1025.6 234.83 L1026.6 235.08 L1027.6 235.30 L1028.6 235.49 L1029.6 235.64 L1030.6 235.75 L1031.6 235.82 L1032.6 235.82 L1033.6 235.74 L1034.6 235.58 L1035.6 235.33 L1036.6 234.99 L1037.6 234.56 L1038.6 234.06 L1039.6 233.50 L1040.6 232.90 L1041.6 232.26 L1042.6 231.61 L1043.6 230.95 L1044.6 230.30 L1045.6 229.67 L1046.6 229.08 L1047.6 228.53 L1048.6 228.01 L1049.6 227.53 L1050.6 227.08 L1051.6 226.64 L1052.6 226.20 L1053.6 225.78 L1054.6 225.35 L1055.6 224.94 L1056.6 224.54 L1057.6 224.16 L1058.6 223.80 L1059.6 223.47 L1060.6 223.19 L1061.6 222.94 L1062.6 222.74 L1063.6 222.59 L1064.6 222.50 L1065.6 222.48 L1066.6 222.53 L1067.6 222.65 L1068.6 222.85 L1069.6 223.11 L1070.6 223.44 L1071.6 223.82 L1072.6 224.25 L1073.6 224.72 L1074.6 225.22 L1075.6 225.75 L1076.6 226.29 L1077.6 226.84 L1078.6 227.41 L1079.6 228.00 L1080.6 228.61 L1081.6 229.24 L1082.6 229.91 L1083.6 230.62 L1084.6 231.37 L1085.6 232.15 L1086.6 232.97 L1087.6 233.82 L1088.6 234.71 L1089.6 235.64 L1090.6 236.60 L1091.6 237.60 L1092.6 238.63 L1093.6 239.69 L1094.6 240.78 L1095.6 241.91 L1096.6 243.06 L1097.6 244.25 L1098.6 245.46 L1099.6 246.68 L1100.6 247.88 L1101.6 249.01 L1102.6 250.00 L1103.6 250.78 L1104.3 347 L259.6 347Z" fill="url(#ag)" mask="url(#am)"/>
 <g stroke="#e3e3e3" stroke-width="1" stroke-dasharray="3 2">
  <path d="M260.5 200.5 H1112 M260.5 229.5 H1112 M260.5 259 H1112 M260.5 288.5 H1112 M260.5 318 H1112"/>
 </g>
 <path d="M259.6 251.41 L260.6 251.43 L261.6 251.44 L262.6 251.47 L263.6 251.51 L264.6 251.55 L265.6 251.61 L266.6 251.68 L267.6 251.76 L268.6 251.88 L269.6 252.03 L270.6 252.23 L271.6 252.50 L272.6 252.85 L273.6 253.29 L274.6 253.80 L275.6 254.39 L276.6 255.06 L277.6 255.81 L278.6 256.67 L279.6 257.67 L280.6 258.83 L281.6 260.17 L282.6 261.68 L283.6 263.30 L284.6 264.97 L285.6 266.65 L286.6 268.26 L287.6 269.79 L288.6 271.24 L289.6 272.61 L290.6 273.91 L291.6 275.15 L292.6 276.32 L293.6 277.40 L294.6 278.37 L295.6 279.21 L296.6 279.93 L297.6 280.53 L298.6 281.02 L299.6 281.43 L300.6 281.78 L301.6 282.09 L302.6 282.36 L303.6 282.61 L304.6 282.83 L305.6 283.03 L306.6 283.21 L307.6 283.37 L308.6 283.51 L309.6 283.63 L310.6 283.75 L311.6 283.84 L312.6 283.93 L313.6 284.01 L314.6 284.09 L315.6 284.16 L316.6 284.24 L317.6 284.33 L318.6 284.43 L319.6 284.54 L320.6 284.68 L321.6 284.84 L322.6 285.02 L323.6 285.23 L324.6 285.46 L325.6 285.71 L326.6 285.97 L327.6 286.24 L328.6 286.51 L329.6 286.78 L330.6 287.04 L331.6 287.30 L332.6 287.56 L333.6 287.82 L334.6 288.08 L335.6 288.34 L336.6 288.60 L337.6 288.85 L338.6 289.08 L339.6 289.28 L340.6 289.44 L341.6 289.56 L342.6 289.62 L343.6 289.62 L344.6 289.55 L345.6 289.41 L346.6 289.21 L347.6 288.94 L348.6 288.61 L349.6 288.22 L350.6 287.78 L351.6 287.28 L352.6 286.70 L353.6 286.02 L354.6 285.22 L355.6 284.28 L356.6 283.20 L357.6 281.98 L358.6 280.65 L359.6 279.20 L360.6 277.64 L361.6 275.95 L362.6 274.11 L363.6 272.15 L364.6 270.09 L365.6 268.01 L366.6 266.00 L367.6 264.12 L368.6 262.44 L369.6 260.98 L370.6 259.73 L371.6 258.65 L372.6 257.72 L373.6 256.91 L374.6 256.23 L375.6 255.66 L376.6 255.21 L377.6 254.87 L378.6 254.63 L379.6 254.45 L380.6 254.32 L381.6 254.22 L382.6 254.12 L383.6 254.01 L384.6 253.87 L385.6 253.68 L386.6 253.41 L387.6 253.05 L388.6 252.59 L389.6 252.04 L390.6 251.40 L391.6 250.69 L392.6 249.92 L393.6 249.07 L394.6 248.16 L395.6 247.17 L396.6 246.10 L397.6 244.96 L398.6 243.76 L399.6 242.52 L400.6 241.26 L401.6 239.98 L402.6 238.70 L403.6 237.41 L404.6 236.10 L405.6 234.79 L406.6 233.48 L407.6 232.19 L408.6 230.93 L409.6 229.72 L410.6 228.56 L411.6 227.47 L412.6 226.43 L413.6 225.46 L414.6 224.53 L415.6 223.66 L416.6 222.85 L417.6 222.10 L418.6 221.43 L419.6 220.83 L420.6 220.29 L421.6 219.81 L422.6 219.38 L423.6 219.00 L424.6 218.67 L425.6 218.39 L426.6 218.19 L427.6 218.05 L428.6 218.00 L429.6 218.02 L430.6 218.10 L431.6 218.25 L432.6 218.44 L433.6 218.67 L434.6 218.94 L435.6 219.24 L436.6 219.57 L437.6 219.95 L438.6 220.37 L439.6 220.84 L440.6 221.34 L441.6 221.86 L442.6 222.38 L443.6 222.90 L444.6 223.40 L445.6 223.89 L446.6 224.37 L447.6 224.83 L448.6 225.28 L449.6 225.71 L450.6 226.12 L451.6 226.50 L452.6 226.84 L453.6 227.15 L454.6 227.40 L455.6 227.62 L456.6 227.80 L457.6 227.96 L458.6 228.09 L459.6 228.20 L460.6 228.30 L461.6 228.40 L462.6 228.49 L463.6 228.58 L464.6 228.68 L465.6 228.79 L466.6 228.91 L467.6 229.06 L468.6 229.23 L469.6 229.45 L470.6 229.72 L471.6 230.05 L472.6 230.45 L473.6 230.93 L474.6 231.47 L475.6 232.08 L476.6 232.74 L477.6 233.46 L478.6 234.20 L479.6 234.98 L480.6 235.78 L481.6 236.59 L482.6 237.41 L483.6 238.23 L484.6 239.05 L485.6 239.87 L486.6 240.72 L487.6 241.61 L488.6 242.54 L489.6 243.52 L490.6 244.55 L491.6 245.61 L492.6 246.70 L493.6 247.79 L494.6 248.86 L495.6 249.91 L496.6 250.91 L497.6 251.85 L498.6 252.71 L499.6 253.47 L500.6 254.12 L501.6 254.64 L502.6 255.03 L503.6 255.28 L504.6 255.39 L505.6 255.39 L506.6 255.28 L507.6 255.07 L508.6 254.79 L509.6 254.45 L510.6 254.05 L511.6 253.60 L512.6 253.10 L513.6 252.58 L514.6 252.03 L515.6 251.47 L516.6 250.89 L517.6 250.31 L518.6 249.74 L519.6 249.17 L520.6 248.62 L521.6 248.07 L522.6 247.52 L523.6 246.97 L524.6 246.40 L525.6 245.81 L526.6 245.20 L527.6 244.58 L528.6 243.97 L529.6 243.36 L530.6 242.79 L531.6 242.25 L532.6 241.76 L533.6 241.34 L534.6 240.99 L535.6 240.71 L536.6 240.51 L537.6 240.36 L538.6 240.26 L539.6 240.19 L540.6 240.13 L541.6 240.09 L542.6 240.06 L543.6 240.02 L544.6 240.00 L545.6 239.97 L546.6 239.94 L547.6 239.91 L548.6 239.89 L549.6 239.86 L550.6 239.83 L551.6 239.80 L552.6 239.76 L553.6 239.73 L554.6 239.70 L555.6 239.67 L556.6 239.64 L557.6 239.61 L558.6 239.58 L559.6 239.56 L560.6 239.53 L561.6 239.50 L562.6 239.46 L563.6 239.43 L564.6 239.39 L565.6 239.35 L566.6 239.31 L567.6 239.26 L568.6 239.20 L569.6 239.14 L570.6 239.05 L571.6 238.94 L572.6 238.77 L573.6 238.52 L574.6 238.16 L575.6 237.66 L576.6 237.02 L577.6 236.25 L578.6 235.36 L579.6 234.37 L580.6 233.32 L581.6 232.22 L582.6 231.10 L583.6 229.99 L584.6 228.92 L585.6 227.89 L586.6 226.91 L587.6 225.99 L588.6 225.10 L589.6 224.23 L590.6 223.36 L591.6 222.50 L592.6 221.63 L593.6 220.76 L594.6 219.90 L595.6 219.06 L596.6 218.26 L597.6 217.49 L598.6 216.77 L599.6 216.12 L600.6 215.53 L601.6 215.03 L602.6 214.62 L603.6 214.31 L604.6 214.11 L605.6 214.03 L606.6 214.08 L607.6 214.27 L608.6 214.58 L609.6 215.02 L610.6 215.56 L611.6 216.21 L612.6 216.94 L613.6 217.74 L614.6 218.60 L615.6 219.50 L616.6 220.42 L617.6 221.37 L618.6 222.33 L619.6 223.32 L620.6 224.33 L621.6 225.40 L622.6 226.53 L623.6 227.72 L624.6 228.96 L625.6 230.21 L626.6 231.47 L627.6 232.69 L628.6 233.86 L629.6 234.95 L630.6 235.96 L631.6 236.89 L632.6 237.77 L633.6 238.60 L634.6 239.41 L635.6 240.20 L636.6 240.96 L637.6 241.70 L638.6 242.40 L639.6 243.06 L640.6 243.66 L641.6 244.21 L642.6 244.70 L643.6 245.10 L644.6 245.42 L645.6 245.65 L646.6 245.77 L647.6 245.78 L648.6 245.66 L649.6 245.43 L650.6 245.07 L651.6 244.60 L652.6 244.04 L653.6 243.40 L654.6 242.70 L655.6 241.97 L656.6 241.21 L657.6 240.45 L658.6 239.68 L659.6 238.91 L660.6 238.12 L661.6 237.31 L662.6 236.45 L663.6 235.56 L664.6 234.63 L665.6 233.68 L666.6 232.74 L667.6 231.82 L668.6 230.95 L669.6 230.16 L670.6 229.46 L671.6 228.88 L672.6 228.43 L673.6 228.14 L674.6 227.99 L675.6 228.00 L676.6 228.15 L677.6 228.42 L678.6 228.80 L679.6 229.28 L680.6 229.84 L681.6 230.47 L682.6 231.16 L683.6 231.90 L684.6 232.69 L685.6 233.53 L686.6 234.45 L687.6 235.47 L688.6 236.61 L689.6 237.91 L690.6 239.33 L691.6 240.85 L692.6 242.40 L693.6 243.92 L694.6 245.34 L695.6 246.59 L696.6 247.63 L697.6 248.45 L698.6 249.06 L699.6 249.50 L700.6 249.82 L701.6 250.06 L702.6 250.24 L703.6 250.40 L704.6 250.52 L705.6 250.60 L706.6 250.64 L707.6 250.61 L708.6 250.51 L709.6 250.32 L710.6 250.05 L711.6 249.69 L712.6 249.28 L713.6 248.85 L714.6 248.42 L715.6 248.02 L716.6 247.66 L717.6 247.33 L718.6 247.04 L719.6 246.77 L720.6 246.51 L721.6 246.28 L722.6 246.06 L723.6 245.85 L724.6 245.66 L725.6 245.49 L726.6 245.33 L727.6 245.18 L728.6 245.05 L729.6 244.92 L730.6 244.80 L731.6 244.68 L732.6 244.56 L733.6 244.45 L734.6 244.34 L735.6 244.23 L736.6 244.13 L737.6 244.03 L738.6 243.93 L739.6 243.84 L740.6 243.75 L741.6 243.66 L742.6 243.57 L743.6 243.49 L744.6 243.41 L745.6 243.33 L746.6 243.26 L747.6 243.18 L748.6 243.11 L749.6 243.05 L750.6 242.98 L751.6 242.92 L752.6 242.86 L753.6 242.81 L754.6 242.75 L755.6 242.70 L756.6 242.65 L757.6 242.61 L758.6 242.56 L759.6 242.52 L760.6 242.48 L761.6 242.44 L762.6 242.41 L763.6 242.38 L764.6 242.34 L765.6 242.31 L766.6 242.29 L767.6 242.26 L768.6 242.23 L769.6 242.21 L770.6 242.18 L771.6 242.16 L772.6 242.14 L773.6 242.12 L774.6 242.10 L775.6 242.08 L776.6 242.06 L777.6 242.04 L778.6 242.02 L779.6 242.00 L780.6 241.98 L781.6 241.96 L782.6 241.95 L783.6 241.93 L784.6 241.91 L785.6 241.89 L786.6 241.87 L787.6 241.85 L788.6 241.83 L789.6 241.80 L790.6 241.78 L791.6 241.76 L792.6 241.73 L793.6 241.70 L794.6 241.67 L795.6 241.65 L796.6 241.61 L797.6 241.58 L798.6 241.55 L799.6 241.51 L800.6 241.47 L801.6 241.44 L802.6 241.40 L803.6 241.35 L804.6 241.31 L805.6 241.27 L806.6 241.22 L807.6 241.18 L808.6 241.13 L809.6 241.08 L810.6 241.03 L811.6 240.97 L812.6 240.92 L813.6 240.86 L814.6 240.81 L815.6 240.74 L816.6 240.68 L817.6 240.62 L818.6 240.55 L819.6 240.48 L820.6 240.41 L821.6 240.34 L822.6 240.26 L823.6 240.18 L824.6 240.10 L825.6 240.01 L826.6 239.93 L827.6 239.84 L828.6 239.74 L829.6 239.65 L830.6 239.55 L831.6 239.44 L832.6 239.34 L833.6 239.23 L834.6 239.11 L835.6 239.00 L836.6 238.88 L837.6 238.75 L838.6 238.63 L839.6 238.49 L840.6 238.35 L841.6 238.20 L842.6 238.03 L843.6 237.83 L844.6 237.60 L845.6 237.33 L846.6 237.01 L847.6 236.65 L848.6 236.24 L849.6 235.81 L850.6 235.34 L851.6 234.85 L852.6 234.35 L853.6 233.84 L854.6 233.33 L855.6 232.83 L856.6 232.34 L857.6 231.87 L858.6 231.43 L859.6 231.02 L860.6 230.65 L861.6 230.32 L862.6 230.04 L863.6 229.80 L864.6 229.60 L865.6 229.42 L866.6 229.25 L867.6 229.06 L868.6 228.84 L869.6 228.53 L870.6 228.11 L871.6 227.55 L872.6 226.82 L873.6 225.93 L874.6 224.90 L875.6 223.76 L876.6 222.57 L877.6 221.35 L878.6 220.17 L879.6 219.04 L880.6 217.98 L881.6 216.99 L882.6 216.05 L883.6 215.14 L884.6 214.25 L885.6 213.37 L886.6 212.49 L887.6 211.62 L888.6 210.77 L889.6 209.94 L890.6 209.14 L891.6 208.38 L892.6 207.66 L893.6 207.00 L894.6 206.39 L895.6 205.85 L896.6 205.38 L897.6 204.99 L898.6 204.69 L899.6 204.49 L900.6 204.38 L901.6 204.39 L902.6 204.50 L903.6 204.72 L904.6 205.04 L905.6 205.45 L906.6 205.96 L907.6 206.54 L908.6 207.18 L909.6 207.89 L910.6 208.64 L911.6 209.44 L912.6 210.26 L913.6 211.10 L914.6 211.95 L915.6 212.83 L916.6 213.74 L917.6 214.69 L918.6 215.72 L919.6 216.82 L920.6 218.00 L921.6 219.23 L922.6 220.48 L923.6 221.69 L924.6 222.83 L925.6 223.85 L926.6 224.71 L927.6 225.41 L928.6 225.95 L929.6 226.35 L930.6 226.65 L931.6 226.89 L932.6 227.08 L933.6 227.27 L934.6 227.46 L935.6 227.67 L936.6 227.93 L937.6 228.24 L938.6 228.61 L939.6 229.06 L940.6 229.56 L941.6 230.12 L942.6 230.72 L943.6 231.36 L944.6 232.01 L945.6 232.66 L946.6 233.31 L947.6 233.96 L948.6 234.61 L949.6 235.27 L950.6 235.95 L951.6 236.64 L952.6 237.35 L953.6 238.06 L954.6 238.75 L955.6 239.43 L956.6 240.06 L957.6 240.64 L958.6 241.14 L959.6 241.56 L960.6 241.88 L961.6 242.10 L962.6 242.21 L963.6 242.21 L964.6 242.11 L965.6 241.93 L966.6 241.69 L967.6 241.39 L968.6 241.05 L969.6 240.66 L970.6 240.23 L971.6 239.75 L972.6 239.21 L973.6 238.63 L974.6 238.01 L975.6 237.36 L976.6 236.69 L977.6 236.01 L978.6 235.32 L979.6 234.65 L980.6 233.99 L981.6 233.35 L982.6 232.74 L983.6 232.14 L984.6 231.56 L985.6 230.98 L986.6 230.40 L987.6 229.82 L988.6 229.23 L989.6 228.65 L990.6 228.08 L991.6 227.52 L992.6 227.00 L993.6 226.52 L994.6 226.08 L995.6 225.69 L996.6 225.36 L997.6 225.11 L998.6 224.94 L999.6 224.85 L1000.6 224.86 L1001.6 224.97 L1002.6 225.16 L1003.6 225.45 L1004.6 225.82 L1005.6 226.26 L1006.6 226.75 L1007.6 227.28 L1008.6 227.85 L1009.6 228.43 L1010.6 229.01 L1011.6 229.58 L1012.6 230.13 L1013.6 230.65 L1014.6 231.12 L1015.6 231.56 L1016.6 231.96 L1017.6 232.33 L1018.6 232.67 L1019.6 233.01 L1020.6 233.34 L1021.6 233.66 L1022.6 233.98 L1023.6 234.28 L1024.6 234.56 L1025.6 234.83 L1026.6 235.08 L1027.6 235.30 L1028.6 235.49 L1029.6 235.64 L1030.6 235.75 L1031.6 235.82 L1032.6 235.82 L1033.6 235.74 L1034.6 235.58 L1035.6 235.33 L1036.6 234.99 L1037.6 234.56 L1038.6 234.06 L1039.6 233.50 L1040.6 232.90 L1041.6 232.26 L1042.6 231.61 L1043.6 230.95 L1044.6 230.30 L1045.6 229.67 L1046.6 229.08 L1047.6 228.53 L1048.6 228.01 L1049.6 227.53 L1050.6 227.08 L1051.6 226.64 L1052.6 226.20 L1053.6 225.78 L1054.6 225.35 L1055.6 224.94 L1056.6 224.54 L1057.6 224.16 L1058.6 223.80 L1059.6 223.47 L1060.6 223.19 L1061.6 222.94 L1062.6 222.74 L1063.6 222.59 L1064.6 222.50 L1065.6 222.48 L1066.6 222.53 L1067.6 222.65 L1068.6 222.85 L1069.6 223.11 L1070.6 223.44 L1071.6 223.82 L1072.6 224.25 L1073.6 224.72 L1074.6 225.22 L1075.6 225.75 L1076.6 226.29 L1077.6 226.84 L1078.6 227.41 L1079.6 228.00 L1080.6 228.61 L1081.6 229.24 L1082.6 229.91 L1083.6 230.62 L1084.6 231.37 L1085.6 232.15 L1086.6 232.97 L1087.6 233.82 L1088.6 234.71 L1089.6 235.64 L1090.6 236.60 L1091.6 237.60 L1092.6 238.63 L1093.6 239.69 L1094.6 240.78 L1095.6 241.91 L1096.6 243.06 L1097.6 244.25 L1098.6 245.46 L1099.6 246.68 L1100.6 247.88 L1101.6 249.01 L1102.6 250.00 L1103.6 250.78" fill="none" stroke="url(#lg)" stroke-width="1.8" stroke-linejoin="round"/>
 <path d="M259.5 194 V347 M259 346.8 H1148" stroke="#d9d9d9" stroke-width="1.4"/>
 <path d="M708.5 187 V347" stroke="#cccccc" stroke-width="1"/>
 <circle cx="708.2" cy="250.7" r="3.3" fill="#fff" stroke="#2c8cf4" stroke-width="1.6"/>
 <g font-family="Liberation Sans" font-size="11" fill="#666">
  <text x="254" y="202.5" text-anchor="end">100</text>
  <text x="254" y="232.0" text-anchor="end">80</text>
  <text x="254" y="261.5" text-anchor="end">60</text>
  <text x="254" y="291.0" text-anchor="end">40</text>
  <text x="254" y="320.5" text-anchor="end">20</text>
  <text x="254" y="350.0" text-anchor="end">0</text>
  <text x="247.5" y="188" text-anchor="middle">(%)</text>
 </g>
 <g font-family="Liberation Sans" font-size="11" fill="#666" text-anchor="middle">
  <text x="265.2" y="365">04-03</text><text x="329.1" y="365">04-05</text><text x="393.0" y="365">04-07</text><text x="456.9" y="365">04-09</text><text x="520.8" y="365">04-11</text><text x="584.7" y="365">04-13</text><text x="648.6" y="365">04-15</text><text x="712.6" y="365">04-16</text><text x="776.5" y="365">04-17</text><text x="840.4" y="365">04-18</text><text x="904.3" y="365">04-19</text><text x="968.2" y="365">04-20</text><text x="1032.1" y="365">04-21</text><text x="1096.0" y="365">04-22</text>
 </g>
 <circle cx="217" cy="270" r="12" fill="#e2ebfa"/>
 <path d="M219.5 265 L214.5 270 L219.5 275" fill="none" stroke="#3a7de9" stroke-width="1.6"/>
 <circle cx="1138" cy="270" r="12" fill="#e2ebfa"/>
 <path d="M1135.5 265 L1140.5 270 L1135.5 275" fill="none" stroke="#3a7de9" stroke-width="1.6"/>
</svg>
<!-- tooltip -->
<div class="a" style="left:728px;top:218px;width:115px;height:47px;background:#fff;border-radius:3px;box-shadow:0 1px 5px rgba(0,0,0,0.16)"></div>
<div class="a" style="left:723px;top:233px;width:0;height:0;border-top:5px solid transparent;border-bottom:5px solid transparent;border-right:6px solid #fff"></div>
<div class="a" style="left:738px;top:227px;font-size:13.5px;line-height:16px;color:#1a1a1a;-webkit-text-stroke:0.2px #1a1a1a">62%</div>
<div class="a" style="left:738px;top:245px;font-size:11px;line-height:14px;color:#555">2020-04-15</div>
<!-- dots -->
<div class="a" style="left:651px;top:388px;width:7px;height:7px;border-radius:50%;background:#d2d2d2"></div>
<div class="a" style="left:671px;top:388px;width:7px;height:7px;border-radius:50%;background:#3a7de9"></div>
<div class="a" style="left:691px;top:388px;width:7px;height:7px;border-radius:50%;background:#d2d2d2"></div>

<!-- STAT CARDS -->
<div class="a" style="left:189px;top:411px;width:224px;height:89px;background:#fff;border-radius:4px;box-shadow:0 0 2px 1px rgba(215,224,242,0.7)"></div>
<div class="a" style="left:211px;top:427px;font-size:25px;line-height:30px;font-weight:bold;color:#252525;letter-spacing:1.5px;transform:scaleX(1.12);transform-origin:0 0">10</div>
<div class="a" style="left:211px;top:465px;font-size:13px;line-height:18px;color:#333">1104数据填报</div>
<div class="a" style="left:341px;top:430px;width:54px;height:54px;background:#eef4fe;border-radius:9px"></div>
<svg class="a" style="left:355px;top:443px" width="32" height="32" viewBox="0 0 32 32"><path d="M3 2.3 H24 Q25 2.3 25 3.3 V15.5 L16.5 24 L15 28.9 H3 Q2 28.9 2 27.9 V3.3 Q2 2.3 3 2.3Z" fill="#3b7ff0"/><g fill="#fff"><rect x="7" y="10" width="13.6" height="1.8"/><rect x="7" y="16" width="13.6" height="1.8"/><rect x="7" y="21.6" width="6.5" height="1.8"/></g><path d="M15.2 28.8 L16.6 23.2 L24.6 15.2 L28.6 19.2 L20.6 27.2Z" fill="#3b7ff0" stroke="#fff" stroke-width="1.1"/><path d="M25.6 14.2 L27.2 12.6 Q27.9 11.9 28.6 12.6 L31 15 Q31.7 15.7 31 16.4 L29.4 18Z" fill="#3b7ff0" stroke="#fff" stroke-width="1.1"/></svg>
<div class="a" style="left:436px;top:411px;width:224px;height:89px;background:#fff;border-radius:4px;box-shadow:0 0 2px 1px rgba(215,224,242,0.7)"></div>
<div class="a" style="left:458px;top:427px;font-size:25px;line-height:30px;font-weight:bold;color:#252525;letter-spacing:1.5px;transform:scaleX(1.12);transform-origin:0 0">20</div>
<div class="a" style="left:458px;top:465px;font-size:13px;line-height:18px;color:#333">1104数据审核</div>
<div class="a" style="left:588px;top:430px;width:54px;height:54px;background:#eef4fe;border-radius:9px"></div>
<svg class="a" style="left:600px;top:440px" width="32" height="32" viewBox="0 0 32 32"><path d="M15.3 1.4 C19.4 1.4 22.6 4.6 22.6 8.7 C22.6 11.5 21 13.2 19.8 14.8 C19 16 19 18.2 20.5 19.8 L27 19.8 Q28.4 19.8 28.4 21.2 L28.4 25.6 L2.2 25.6 L2.2 21.2 Q2.2 19.8 3.6 19.8 L10.1 19.8 C11.6 18.2 11.6 16 10.8 14.8 C9.6 13.2 8 11.5 8 8.7 C8 4.6 11.2 1.4 15.3 1.4Z" fill="#3b7ff0"/><rect x="2.2" y="28" width="26.2" height="2.6" fill="#3b7ff0"/></svg>
<div class="a" style="left:682px;top:411px;width:224px;height:89px;background:#fff;border-radius:4px;box-shadow:0 0 2px 1px rgba(215,224,242,0.7)"></div>
<div class="a" style="left:704px;top:427px;font-size:25px;line-height:30px;font-weight:bold;color:#252525;letter-spacing:1.5px;transform:scaleX(1.12);transform-origin:0 0">33</div>
<div class="a" style="left:704px;top:465px;font-size:13px;line-height:18px;color:#333"><span style="letter-spacing:-0.8px">EAST4S</span>数据填报</div>
<div class="a" style="left:834px;top:430px;width:54px;height:54px;background:#eef4fe;border-radius:9px"></div>
<svg class="a" style="left:848px;top:443px" width="32" height="32" viewBox="0 0 32 32"><path d="M3 2.3 H24 Q25 2.3 25 3.3 V15.5 L16.5 24 L15 28.9 H3 Q2 28.9 2 27.9 V3.3 Q2 2.3 3 2.3Z" fill="#3b7ff0"/><g fill="#fff"><rect x="7" y="10" width="13.6" height="1.8"/><rect x="7" y="16" width="13.6" height="1.8"/><rect x="7" y="21.6" width="6.5" height="1.8"/></g><path d="M15.2 28.8 L16.6 23.2 L24.6 15.2 L28.6 19.2 L20.6 27.2Z" fill="#3b7ff0" stroke="#fff" stroke-width="1.1"/><path d="M25.6 14.2 L27.2 12.6 Q27.9 11.9 28.6 12.6 L31 15 Q31.7 15.7 31 16.4 L29.4 18Z" fill="#3b7ff0" stroke="#fff" stroke-width="1.1"/></svg>
<div class="a" style="left:929px;top:411px;width:224px;height:89px;background:#fff;border-radius:4px;box-shadow:0 0 2px 1px rgba(215,224,242,0.7)"></div>
<div class="a" style="left:951px;top:427px;font-size:25px;line-height:30px;font-weight:bold;color:#252525;letter-spacing:1.5px;transform:scaleX(1.12);transform-origin:0 0">22</div>
<div class="a" style="left:951px;top:465px;font-size:13px;line-height:18px;color:#333"><span style="letter-spacing:-0.8px">EAST4S</span>数据审核</div>
<div class="a" style="left:1081px;top:430px;width:54px;height:54px;background:#eef4fe;border-radius:9px"></div>
<svg class="a" style="left:1093px;top:440px" width="32" height="32" viewBox="0 0 32 32"><path d="M15.3 1.4 C19.4 1.4 22.6 4.6 22.6 8.7 C22.6 11.5 21 13.2 19.8 14.8 C19 16 19 18.2 20.5 19.8 L27 19.8 Q28.4 19.8 28.4 21.2 L28.4 25.6 L2.2 25.6 L2.2 21.2 Q2.2 19.8 3.6 19.8 L10.1 19.8 C11.6 18.2 11.6 16 10.8 14.8 C9.6 13.2 8 11.5 8 8.7 C8 4.6 11.2 1.4 15.3 1.4Z" fill="#3b7ff0"/><rect x="2.2" y="28" width="26.2" height="2.6" fill="#3b7ff0"/></svg>

<svg class="a" style="left:177px;top:444px" width="22" height="22" viewBox="0 0 22 22"><circle cx="11" cy="11" r="11" fill="#e2ebfa"/><path d="M12.6 6.8 L8.6 11 L12.6 15.2" fill="none" stroke="#3a7de9" stroke-width="1.5"/></svg>
<svg class="a" style="left:1143px;top:444.5px" width="22" height="22" viewBox="0 0 22 22"><circle cx="11" cy="11" r="11" fill="#e2ebfa"/><path d="M9.4 6.8 L13.4 11 L9.4 15.2" fill="none" stroke="#3a7de9" stroke-width="1.5"/></svg>
<!-- MENU PANEL -->
<div class="a" style="left:192px;top:525px;width:965px;height:143px;background:#fff;border-radius:4px;box-shadow:0 0 2px 1px rgba(215,224,242,0.7)"></div>
<svg class="a" style="left:209px;top:565px" width="13" height="13" viewBox="0 0 13 13">
 <g fill="#3d7eea"><rect x="0" y="0" width="5.5" height="5.5"/><rect x="0" y="7" width="5.5" height="5.5"/><rect x="7" y="7" width="5.5" height="5.5"/></g>
 <rect x="7.6" y="1.2" width="3.8" height="3.8" transform="rotate(45 9.5 3.1)" fill="none" stroke="#3d7eea" stroke-width="1.1"/>
</svg>
<div class="a" style="left:209px;top:585px;width:14px;font-size:12.3px;line-height:12.4px;color:#333">常用菜单</div>
<svg class="a" style="left:235px;top:591px" width="22" height="22" viewBox="0 0 22 22"><circle cx="11" cy="11" r="11" fill="#e2ebfa"/><path d="M12.8 6.5 L8.5 11 L12.8 15.5" fill="none" stroke="#3a7de9" stroke-width="1.6"/></svg>
<svg class="a" style="left:1120px;top:591px" width="22" height="22" viewBox="0 0 22 22"><circle cx="11" cy="11" r="11" fill="#e2ebfa"/><path d="M9.2 6.5 L13.5 11 L9.2 15.5" fill="none" stroke="#3a7de9" stroke-width="1.6"/></svg>
<div class="a" style="left:265px;top:541px;width:289px;height:114px;background:#f3f7fd;border-radius:4px"></div>
<div class="a" style="left:572px;top:541px;width:289px;height:114px;background:#f3f7fd;border-radius:4px"></div>
<div class="a" style="left:877px;top:541px;width:232px;height:114px;background:#f3f7fd;border-radius:4px"></div>
<div class="a" style="left:289px;top:560px;width:38px;height:38px;background:#f7efea;border-radius:9px;box-shadow:0 1px 3px rgba(0,0,0,0.09)"></div>
<div class="a" style="left:297px;top:568px"><svg width="22" height="22" viewBox="0 0 22 22"><g fill="#fa8a2a"><rect x="1" y="13" width="3" height="5"/><rect x="5.5" y="10" width="3" height="8"/><rect x="10" y="8" width="3" height="10"/><rect x="14.5" y="5" width="3" height="9"/><rect x="1" y="19" width="13" height="1.2"/></g><path d="M1.5 9.5 Q10 8 15.5 1.5" fill="none" stroke="#fa8a2a" stroke-width="1.2"/><path d="M13.5 1.5 L17 0 L16.5 3.8Z" fill="#fa8a2a"/><circle cx="17" cy="17" r="4.3" fill="#fa8a2a" stroke="#f7efea" stroke-width="1"/><path d="M15.3 15 L17 17.2 L18.7 15 M17 17.2 V20 M15.5 18 H18.5" stroke="#fff" stroke-width="0.9" fill="none"/></svg></div>
<div class="a" style="left:258px;top:603px;width:100px;text-align:center;font-size:10.8px;line-height:16px;color:#555">客户风险</div>
<div class="a" style="left:390px;top:560px;width:38px;height:38px;background:#e3eefb;border-radius:9px;box-shadow:0 1px 3px rgba(0,0,0,0.09)"></div>
<div class="a" style="left:398px;top:568px"><svg width="22" height="22" viewBox="0 0 28 28"><path d="M1 1.5 Q1 0.5 2 0.5 L22 0.5 Q23 0.5 23 1.5 L23 13 L14 22 L12.5 27 L2 27 Q1 27 1 26Z" fill="#3b82e6"/><g fill="#fff"><rect x="5.5" y="6" width="13" height="1.8"/><rect x="5.5" y="10.8" width="13" height="1.8"/><rect x="5.5" y="15.6" width="6" height="1.8"/><rect x="5.5" y="20.4" width="5" height="1.8"/></g><path d="M15.3 22.8 L23.8 14.3 L26.8 17.3 L18.3 25.8 L14.2 27 Z" fill="#3b82e6" stroke="#fff" stroke-width="1.2"/></svg></div>
<div class="a" style="left:359px;top:603px;width:100px;text-align:center;font-size:10.8px;line-height:16px;color:#555">模块管理</div>
<div class="a" style="left:490px;top:560px;width:38px;height:38px;background:#f6e8ea;border-radius:9px;box-shadow:0 1px 3px rgba(0,0,0,0.09)"></div>
<div class="a" style="left:498px;top:568px"><svg width="22" height="22" viewBox="0 0 22 22"><path d="M1.5 3 Q1.5 1.5 3 1.5 L19.5 1.5 Q21 1.5 21 3 L21 14.5 Q21 16 19.5 16 L7 16 L1.5 19.5Z" fill="#ee4b5a"/><rect x="6" y="5.8" width="10.5" height="1.6" rx="0.8" fill="#fff"/><rect x="6" y="10" width="7.5" height="1.6" rx="0.8" fill="#fff"/></svg></div>
<div class="a" style="left:459px;top:603px;width:100px;text-align:center;font-size:10.8px;line-height:16px;color:#555">校验公式管理</div>
<div class="a" style="left:606px;top:560px;width:38px;height:38px;background:#eaf2ea;border-radius:9px;box-shadow:0 1px 3px rgba(0,0,0,0.09)"></div>
<div class="a" style="left:614px;top:568px"><svg width="22" height="22" viewBox="0 0 22 22"><g fill="#6ab04c"><rect x="1.5" y="2.5" width="18" height="3"/><circle cx="10.5" cy="2.2" r="1.3"/><rect x="1.5" y="7" width="18" height="12"/></g><path d="M5.5 12.5 L9 16 L15.5 9.5" fill="none" stroke="#fff" stroke-width="1.8"/></svg></div>
<div class="a" style="left:575px;top:603px;width:100px;text-align:center;font-size:10.8px;line-height:16px;color:#555">大额现金收付</div>
<div class="a" style="left:698px;top:560px;width:38px;height:38px;background:#e3f1f4;border-radius:9px;box-shadow:0 1px 3px rgba(0,0,0,0.09)"></div>
<div class="a" style="left:706px;top:568px"><svg width="22" height="22" viewBox="0 0 22 22"><g fill="none" stroke="#4dbfb0"><circle cx="11" cy="11" r="9.8" stroke-width="1"/><circle cx="11" cy="11" r="6.8" stroke-width="1.5"/><path d="M11 0.5 V21.5 M0.5 11 H21.5" stroke-width="1.4"/></g><circle cx="11" cy="11" r="4.2" fill="#4dbfb0"/></svg></div>
<div class="a" style="left:667px;top:603px;width:100px;text-align:center;font-size:10.8px;line-height:16px;color:#555">补录系统</div>
<div class="a" style="left:790px;top:560px;width:38px;height:38px;background:#deecfa;border-radius:9px;box-shadow:0 1px 3px rgba(0,0,0,0.09)"></div>
<div class="a" style="left:798px;top:568px"><svg width="22" height="22" viewBox="0 0 22 22"><g fill="#1e8be6"><g id="gt"><rect x="9.2" y="0.3" width="3.6" height="4.2" rx="0.6"/></g><use href="#gt" transform="rotate(45 11 11)"/><use href="#gt" transform="rotate(90 11 11)"/><use href="#gt" transform="rotate(135 11 11)"/><use href="#gt" transform="rotate(180 11 11)"/><use href="#gt" transform="rotate(225 11 11)"/><use href="#gt" transform="rotate(270 11 11)"/><use href="#gt" transform="rotate(315 11 11)"/><circle cx="11" cy="11" r="7.3"/></g><circle cx="11" cy="11" r="4.7" fill="#deecfa"/><path d="M11.5 11.5 L19 19" stroke="#deecfa" stroke-width="3.8"/><path d="M11.5 11.5 L18.8 18.8" stroke="#1e8be6" stroke-width="2" stroke-linecap="round"/><circle cx="10.3" cy="10.3" r="3.2" fill="#1e8be6"/><rect x="7.2" y="8.6" width="2.6" height="2.2" transform="rotate(45 8.5 9.7)" fill="#deecfa"/></svg></div>
<div class="a" style="left:761px;top:603px;width:100px;text-align:center;font-size:10.8px;line-height:16px;color:#555">参数配置</div>
<div class="a" style="left:902px;top:560px;width:38px;height:38px;background:#f7eee6;border-radius:9px;box-shadow:0 1px 3px rgba(0,0,0,0.09)"></div>
<div class="a" style="left:910px;top:568px"><svg width="22" height="22" viewBox="0 0 22 22"><g fill="#fa8a1e"><ellipse cx="9" cy="4" rx="8" ry="3.3"/><path d="M1 8 Q1 10.5 9 11 L9 14 Q1 13.5 1 11Z"/><path d="M1 14.5 Q1 17 9 17.5 L9 20 Q1 19.5 1 17Z"/></g><circle cx="14.5" cy="14.5" r="4.2" fill="none" stroke="#fa8a1e" stroke-width="1.8"/><path d="M17.5 17.5 L20.5 20.5" stroke="#fa8a1e" stroke-width="2"/></svg></div>
<div class="a" style="left:871px;top:603px;width:100px;text-align:center;font-size:10.8px;line-height:16px;color:#555">数据查询</div>
<div class="a" style="left:975px;top:560px;width:38px;height:38px;background:#e3eefb;border-radius:9px;box-shadow:0 1px 3px rgba(0,0,0,0.09)"></div>
<div class="a" style="left:983px;top:568px"><svg width="22" height="22" viewBox="0 0 28 28"><path d="M1 1.5 Q1 0.5 2 0.5 L22 0.5 Q23 0.5 23 1.5 L23 13 L14 22 L12.5 27 L2 27 Q1 27 1 26Z" fill="#3b82e6"/><g fill="#fff"><rect x="5.5" y="6" width="13" height="1.8"/><rect x="5.5" y="10.8" width="13" height="1.8"/><rect x="5.5" y="15.6" width="6" height="1.8"/><rect x="5.5" y="20.4" width="5" height="1.8"/></g><path d="M15.3 22.8 L23.8 14.3 L26.8 17.3 L18.3 25.8 L14.2 27 Z" fill="#3b82e6" stroke="#fff" stroke-width="1.2"/></svg></div>
<div class="a" style="left:944px;top:603px;width:100px;text-align:center;font-size:10.8px;line-height:16px;color:#555">名称</div>
<div class="a" style="left:1049px;top:560px;width:38px;height:38px;background:#e6f2e8;border-radius:9px;box-shadow:0 1px 3px rgba(0,0,0,0.09)"></div>
<div class="a" style="left:1057px;top:568px"><svg width="22" height="22" viewBox="0 0 22 22"><g fill="#22ab22"><rect x="1" y="1" width="9.3" height="9.3" rx="2.5"/><rect x="11.7" y="1" width="9.3" height="9.3" rx="2.5"/><rect x="1" y="11.7" width="9.3" height="9.3" rx="2.5"/><rect x="11.7" y="11.7" width="9.3" height="9.3" rx="2.5"/></g></svg></div>
<div class="a" style="left:1018px;top:603px;width:100px;text-align:center;font-size:10.8px;line-height:16px;color:#555">名称</div>
<div class="a" style="left:350px;top:640px;width:30px;height:1px;background:#8fb6f5"></div>
<div class="a" style="left:439px;top:640px;width:30px;height:1px;background:#8fb6f5"></div>
<div class="a" style="left:386px;top:632px;font-size:11px;line-height:16px;color:#4a8ef0">1104系统</div>
<div class="a" style="left:641px;top:640px;width:30px;height:1px;background:#8fb6f5"></div>
<div class="a" style="left:761px;top:640px;width:30px;height:1px;background:#8fb6f5"></div>
<div class="a" style="left:676px;top:632px;font-size:11px;line-height:16px;color:#4a8ef0"><span style="letter-spacing:-0.7px">EAST4S</span>数据填报</div>
<div class="a" style="left:934px;top:640px;width:30px;height:1px;background:#8fb6f5"></div>
<div class="a" style="left:1022px;top:640px;width:31px;height:1px;background:#8fb6f5"></div>
<div class="a" style="left:970px;top:632px;font-size:11px;line-height:16px;color:#4a8ef0">1104系统</div>

<!-- RIGHT PANEL -->
<div class="a" style="left:1181px;top:121px;width:332px;height:560px;background:#fff;border-radius:4px;box-shadow:0 0 2px 1px rgba(215,224,242,0.7)"></div>

<svg class="a" style="left:1314px;top:129px" width="68" height="68" viewBox="0 0 68 68">
 <defs><clipPath id="av"><circle cx="34" cy="34" r="32"/></clipPath>
 <linearGradient id="wall" x1="0" y1="0" x2="1" y2="0"><stop offset="0" stop-color="#4a2e22"/><stop offset="0.3" stop-color="#6e4c3c"/><stop offset="0.55" stop-color="#a88a7a"/><stop offset="1" stop-color="#b99c8c"/></linearGradient></defs>
 <g clip-path="url(#av)">
  <rect x="0" y="0" width="68" height="68" fill="url(#wall)"/>
  <path d="M42 20 H68 M42 36 H68 M52 0 V68" stroke="#c4aa9c" stroke-width="1" opacity="0.6"/>
  <rect x="12" y="10" width="3.3" height="23" fill="#2b5b9a"/>
  <path d="M8 68 L9 44 Q12 30 22 27 L30 27 Q42 29 46 40 L48 68Z" fill="#f4f5f8"/>
  <path d="M16 40 Q12 50 14 68 L10 68 Z" fill="#dfe2ea"/>
  <path d="M21 16 Q20 5 30 3.8 Q40 3.5 40.5 12 L39 17 Q35 11 29 13 L26 20 L22 22Z" fill="#1d181a"/>
  <path d="M27 13 Q34 10 38 14 L37.5 24 Q35 30 31 29.5 Q27.5 28 26.8 22Z" fill="#e2b9a3"/>
  <path d="M29 27 L36 27 L35 32 L30 32Z" fill="#e2b9a3"/>
  <path d="M35.6 48.5 L59 44.5 L57 52 L32.3 59.6Z" fill="#5c6a98" stroke="#a9b3d0" stroke-width="1.2"/>
  <path d="M37 55 Q41 48.5 47 49 L53 53 L50 58 L42 63 L37 62Z" fill="#e2b9a3"/>
 </g>
 <circle cx="34" cy="34" r="32.2" fill="none" stroke="#3a7de9" stroke-width="1.8"/>
</svg>
<div class="a" style="left:1309px;top:205px;font-size:15px;line-height:20px;color:#222;-webkit-text-stroke:0.35px #222">欢迎, admin</div>
<div class="a" style="left:1395px;top:213px;width:0;height:0;border-left:6px solid transparent;border-right:6px solid transparent;border-top:6px solid #a9adb8"></div>
<div class="a" style="left:1288px;top:229px;font-size:9.5px;letter-spacing:-0.3px;line-height:14px;color:#666">访问情况：今日访问次数6次</div>
<div class="a" style="left:1201px;top:264px;width:60px;text-align:center;font-size:11.5px;line-height:16px;color:#555">全部</div>
<div class="a" style="left:1281px;top:264px;width:60px;text-align:center;font-size:11.5px;line-height:16px;color:#555">已审批</div>
<div class="a" style="left:1365px;top:264px;width:60px;text-align:center;font-size:11.5px;line-height:16px;color:#3a7de9">待办事项</div>
<div class="a" style="left:1440px;top:264px;width:60px;text-align:center;font-size:11.5px;line-height:16px;color:#555">消息</div>
<div class="a" style="left:1479px;top:261px;width:9px;height:9px;border-radius:50%;background:#f0525c"></div>
<div class="a" style="left:1191px;top:287px;width:80px;text-align:center;font-size:20.5px;line-height:24px;color:#1e1e1e;-webkit-text-stroke:0.3px #1e1e1e">1345</div>
<div class="a" style="left:1271px;top:287px;width:80px;text-align:center;font-size:20.5px;line-height:24px;color:#1e1e1e;-webkit-text-stroke:0.3px #1e1e1e">234</div>
<div class="a" style="left:1355px;top:287px;width:80px;text-align:center;font-size:20.5px;line-height:24px;color:#1f6ff0;-webkit-text-stroke:0.3px #1f6ff0">312</div>
<div class="a" style="left:1431px;top:287px;width:80px;text-align:center;font-size:20.5px;line-height:24px;color:#1e1e1e;-webkit-text-stroke:0.3px #1e1e1e">21</div>
<div class="a" style="left:1270px;top:272px;width:1px;height:28px;background:#f0f0f4"></div>
<div class="a" style="left:1351px;top:272px;width:1px;height:28px;background:#f0f0f4"></div>
<div class="a" style="left:1438px;top:272px;width:1px;height:28px;background:#f0f0f4"></div>
<svg class="a" style="left:1207px;top:335px" width="14" height="15" viewBox="0 0 14 15">
 <path d="M1 1 H12 V6.5 M12 14 H1 V1" fill="none" stroke="#3d7eea" stroke-width="1.3"/><rect x="1" y="1" width="11" height="2.6" fill="#3d7eea"/>
 <g fill="#3d7eea"><rect x="3" y="6" width="4" height="1.2"/><rect x="3" y="8.5" width="3" height="1.2"/><rect x="3" y="11" width="3" height="1.2"/></g>
 <circle cx="10" cy="11" r="3" fill="none" stroke="#3d7eea" stroke-width="1.2"/><path d="M10 9.5 V11 H11.3" fill="none" stroke="#3d7eea" stroke-width="0.9"/>
</svg>
<div class="a" style="left:1229px;top:334px;font-size:12.5px;line-height:18px;color:#333">代办事项</div>
<div class="a" style="left:1198px;top:358px;width:299px;height:1px;background:#ebebeb"></div>
<div class="a" style="left:1198px;top:368px;width:301px;height:75px;background:#3b80f8;border-radius:8px"></div>
<div class="a" style="left:1217px;top:388px;font-size:11.6px;letter-spacing:-0.2px;line-height:16px;color:#fff;-webkit-text-stroke:0.2px #fff">2020年4月20日数据跑批失败</div>
<div class="a" style="left:1423px;top:388px;font-size:11.3px;line-height:16px;color:#fff;-webkit-text-stroke:0.25px #fff">2020-04-20</div>
<div class="a" style="left:1217px;top:414px;font-size:11px;line-height:16px;color:#fff;-webkit-text-stroke:0.25px #fff">发起人：张三</div>
<div class="a" style="left:1326px;top:414px;font-size:11px;line-height:16px;color:#fff;-webkit-text-stroke:0.25px #fff">剩余15天</div>
<div class="a" style="left:1382px;top:419px;width:103px;height:6px;border-radius:3px;background:#e6e8ec"></div>
<div class="a" style="left:1382px;top:419px;width:59px;height:6px;border-radius:3px;background:#0e9bff"></div>
<div class="a" style="left:1217px;top:465px;font-size:11.6px;letter-spacing:-0.2px;line-height:16px;color:#3a3a3a;-webkit-text-stroke:0.2px #3a3a3a">2020年4月20日数据跑批失败</div>
<div class="a" style="left:1423px;top:465px;font-size:11.3px;line-height:16px;color:#888">2020-04-20</div>
<div class="a" style="left:1217px;top:490px;font-size:11px;line-height:16px;color:#888">发起人：张三</div>
<div class="a" style="left:1326px;top:490px;font-size:11px;line-height:16px;color:#888">剩余15天</div>
<div class="a" style="left:1382px;top:496px;width:103px;height:6px;border-radius:3px;background:#e9ecf2"></div>
<div class="a" style="left:1382px;top:496px;width:44px;height:6px;border-radius:3px;background:#108ffd"></div>
<div class="a" style="left:1217px;top:547px;font-size:11.6px;letter-spacing:-0.2px;line-height:16px;color:#3a3a3a;-webkit-text-stroke:0.2px #3a3a3a">2020年4月20日数据跑批失败</div>
<div class="a" style="left:1423px;top:547px;font-size:11.3px;line-height:16px;color:#888">2020-04-20</div>
<div class="a" style="left:1217px;top:573px;font-size:11px;line-height:16px;color:#888">发起人：张三</div>
<div class="a" style="left:1326px;top:573px;font-size:11px;line-height:16px;color:#888">剩余15天</div>
<div class="a" style="left:1382px;top:578px;width:103px;height:6px;border-radius:3px;background:#e9ecf2"></div>
<div class="a" style="left:1382px;top:578px;width:52px;height:6px;border-radius:3px;background:#108ffd"></div>
<div class="a" style="left:1217px;top:624px;font-size:11.6px;letter-spacing:-0.2px;line-height:16px;color:#3a3a3a;-webkit-text-stroke:0.2px #3a3a3a">2020年4月20日数据跑批失败</div>
<div class="a" style="left:1423px;top:624px;font-size:11.3px;line-height:16px;color:#888">2020-04-20</div>
<div class="a" style="left:1217px;top:649px;font-size:11px;line-height:16px;color:#888">发起人：张三</div>
<div class="a" style="left:1326px;top:649px;font-size:11px;line-height:16px;color:#888">剩余4天</div>
<div class="a" style="left:1382px;top:654px;width:103px;height:6px;border-radius:3px;background:#e9ecf2"></div>
<div class="a" style="left:1382px;top:654px;width:92px;height:6px;border-radius:3px;background:#f7c12e"></div>
<div class="a" style="left:1209px;top:527px;width:288px;height:1px;background:#ececec"></div>
<div class="a" style="left:1209px;top:605px;width:288px;height:1px;background:#ececec"></div>


<div class="a" style="left:1544px;top:0;width:1px;height:672px;background:#e0e1e6"></div>
</body></html>
